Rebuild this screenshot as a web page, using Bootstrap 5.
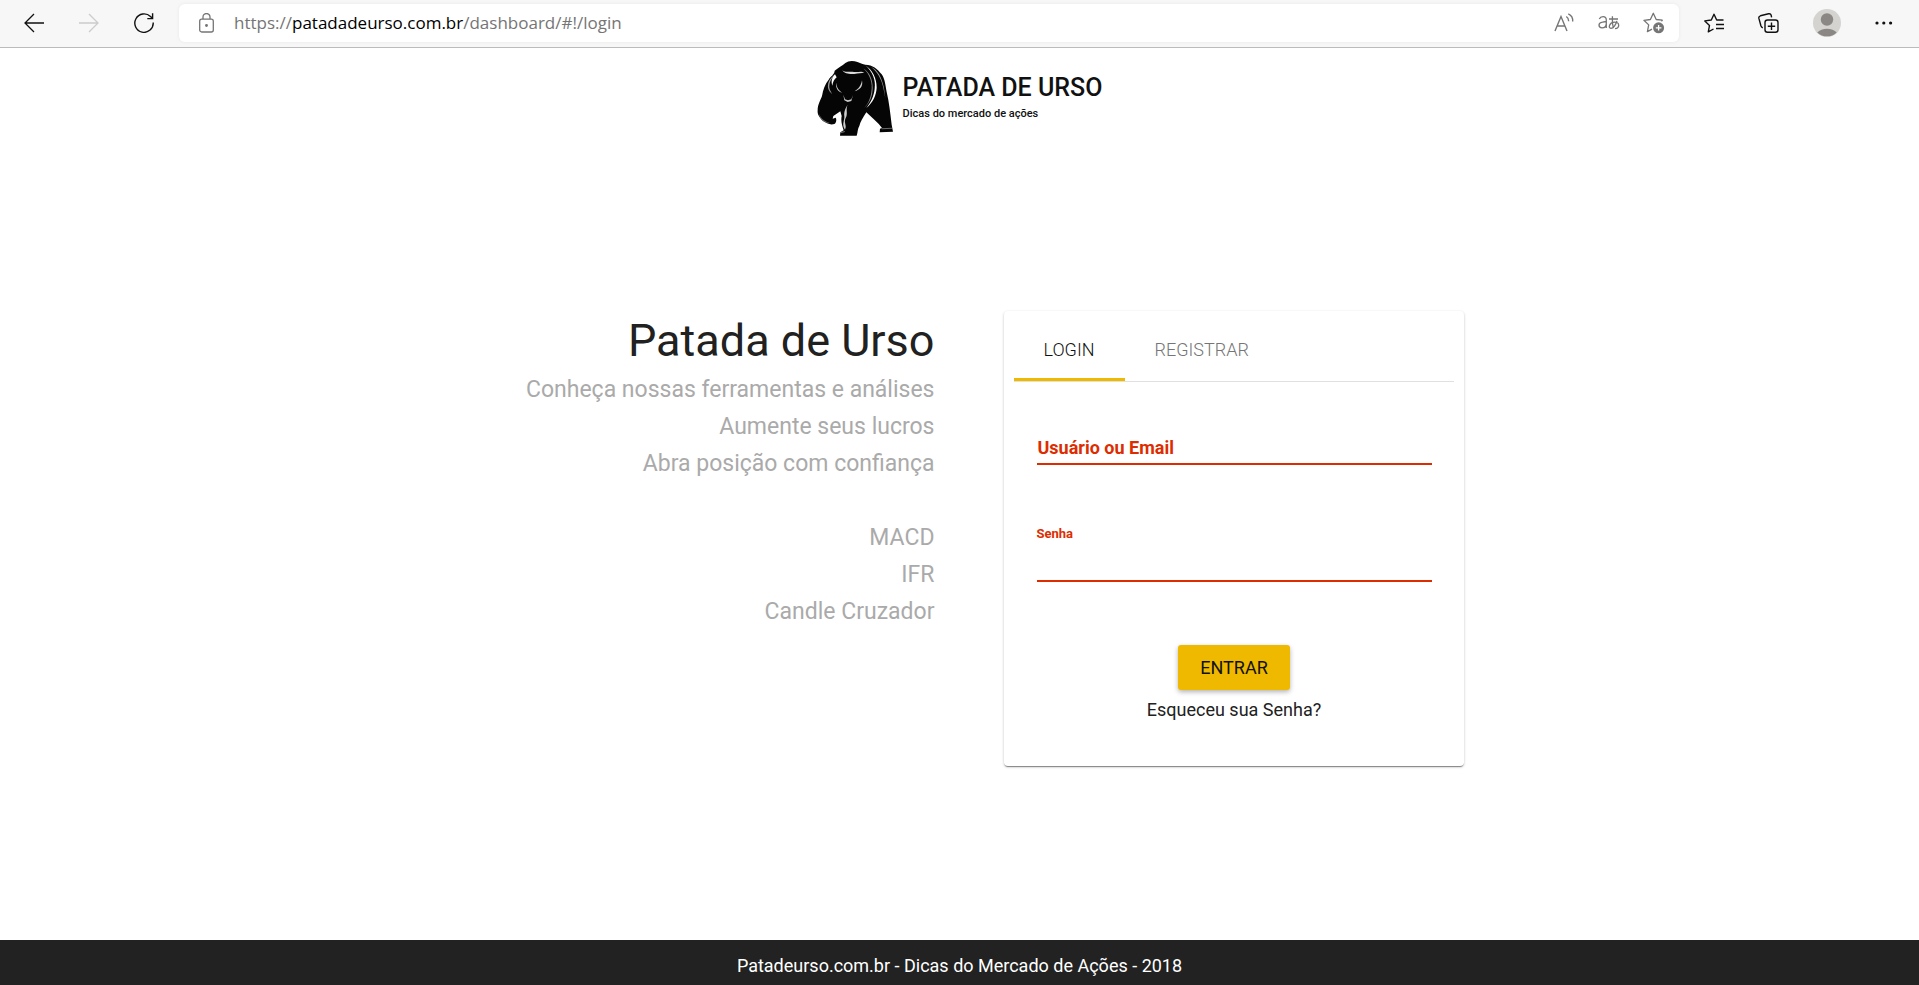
<!DOCTYPE html>
<html lang="pt-BR">
<head>
<meta charset="utf-8">
<meta name="viewport" content="width=device-width, initial-scale=1">
<title>Patada de Urso</title>
<link href="https://cdn.jsdelivr.net/npm/bootstrap@5.3.0/dist/css/bootstrap.min.css" rel="stylesheet">
<style>
  body { font-family: Roboto, sans-serif; color: #212121; background: #fff; }
  svg { display: block; }

  /* browser toolbar */
  .toolbar { background: #f7f7f7; border-bottom: 1px solid #bbb; height: 48px; padding: 4px 26px 5px 24px; }
  .tool { border: 0; background: none; padding: 0; color: #111; }
  .tool:disabled { color: #ccc; }
  .nav-tools { gap: 35px; margin-right: 25px; }
  .address { background: #fff; border-radius: 6px; height: 38px; padding: 0 14px 0 20px; box-shadow: 0 0 4px rgba(0,0,0,.06); }
  .address .tool { color: #757575; }
  .url { font-family: "Open Sans", "Noto Sans", sans-serif; font-size: 17px; line-height: 24px; color: #757575; margin-left: 20px; }
  .url b { font-weight: 400; color: #000; }
  .page-tools { gap: 23px; }
  .main-tools { gap: 34px; margin-left: 25px; }

  /* site */
  .brand { padding-top: 13px; gap: 10px; }
  .brand-name { font-size: 25px; line-height: 30px; color: #111; font-weight: 500; }
  .brand-sub { font-size: 11px; line-height: 22px; color: #111; font-weight: 500; }
  .login-area { max-width: 1008px; }
  .pitch { padding-right: 25px; }
  .pitch h1 { font-size: 45px; line-height: 60px; font-weight: 400; margin: 0; }
  .pitch p { font-size: 23px; line-height: 37px; color: #aaa; margin: 0; }
  .form-side { padding-left: 44px; }
  .panel { border: 0; border-radius: 4px; padding: 10px; box-shadow: 0 1px 3px rgba(0,0,0,.2), 0 1px 1px rgba(0,0,0,.14), 0 2px 1px -1px rgba(0,0,0,.3); }
  .tabs { border-bottom: 1px solid #e0e0e0; }
  .tabs .nav-link { border: 0; border-bottom: 3px solid transparent; border-radius: 0; background: none; font-size: 18px; line-height: 24px; font-weight: 300; padding: 17px 30px 16px; color: #757575; }
  .tabs .nav-link.active { color: #111; border-color: #efb900; }
  .fields { padding: 49px 22px 34px 23px; }
  .field label { color: #dd2c00; font-weight: 700; }
  .field input { border: 0; border-bottom: 2px solid #dd2c00; border-radius: 0; padding: 0; outline: 0; }
  .field-user { display: grid; margin-bottom: 61px; }
  .field-user > * { grid-area: 1 / 1; }
  .field-user label { font-size: 18px; line-height: 26px; padding: 4px 0 0 1px; pointer-events: none; z-index: 1; }
  .field-user input { height: 34px; }
  .field-pass label { font-size: 13px; line-height: 16px; display: block; margin-bottom: 8px; }
  .field-pass input { height: 32px; }
  .btn-enter { background: #efb900; color: #111; border: 0; border-radius: 3px; font-size: 18px; line-height: 27px; padding: 9px 22px; box-shadow: 0 2px 5px rgba(0,0,0,.3); margin-top: 63px; }
  .forgot { font-size: 18px; line-height: 24px; color: #212121; margin-top: 8px; }
  .site-footer { background: #222; color: #fff; font-size: 18px; line-height: 27px; padding: 12px 0 6px; }
</style>
</head>
<body class="d-flex flex-column min-vh-100">

<nav class="toolbar d-flex align-items-center" aria-label="Navegador">
  <div class="nav-tools d-flex align-items-center">
    <button class="tool" aria-label="Voltar"><svg width="20" height="20" viewBox="0 0 20 20" fill="none" stroke="currentColor" stroke-width="1.3"><path d="M20 10H1M10 1 1 10l9 9"/></svg></button>
    <button class="tool" aria-label="Avançar" disabled><svg width="20" height="20" viewBox="0 0 20 20" fill="none" stroke="currentColor" stroke-width="1.3"><path d="M0 10h19M10 1l9 9-9 9"/></svg></button>
    <button class="tool" aria-label="Atualizar"><svg width="20" height="20" viewBox="0 0 20 20" fill="none" stroke="currentColor" stroke-width="1.4"><path d="M19.2 9.5A9.2 9.2 0 1 1 16.5 3.6L18.6 5.6M18.6.3v5.3h-5.3"/></svg></button>
  </div>
  <div class="address d-flex align-items-center flex-grow-1">
    <button class="tool" aria-label="Informações do site"><svg width="15" height="20" viewBox="0 0 15 20" fill="none" stroke="currentColor" stroke-width="1.3"><rect x=".7" y="6.2" width="13.6" height="12.8" rx="2"/><path d="M4 6V4a3.5 3.5 0 0 1 7 0v2"/><circle cx="7.5" cy="12.5" r=".8" fill="currentColor"/></svg></button>
    <div class="url">https://<b>patadadeurso.com.br</b>/dashboard/#!/login</div>
    <div class="page-tools d-flex align-items-center ms-auto">
      <button class="tool" aria-label="Ler em voz alta"><svg width="21" height="20" viewBox="0 0 21 20" fill="none" stroke="currentColor" stroke-width="1.4"><path d="M1 18 7 3.5 13 18M3.2 13h7.6M12.3 3.5c1.6 1 2.4 2.8 2.4 4.8M14.3.8C17.600 2.300 19 5.300 18.700 8.500"/></svg></button>
      <button class="tool" aria-label="Traduzir"><svg width="22" height="20" viewBox="0 0 22 20" fill="none" stroke="currentColor" stroke-width="1.3"><path d="M1.300 6C2 4.400 3.300 3.700 5 3.700c2.300 0 3.300 1.200 3.300 3.200v8M8.300 8.500 4.500 9.200C2.200 9.500 1 10.400 1 12.100c0 1.600 1.200 2.700 3 2.700 2.400 0 4.300-1.700 4.300-4.300"/><path d="M11 6h9M14.400 3.200c-.3 5 0 8.500 1 12M18.900 7.800c-1 4-3.600 7.500-5.900 7.500-3.400 0-1.500-6.100 3.500-6.100 5.500 0 5.500 5.900.5 6.500"/></svg></button>
      <button class="tool" aria-label="Adicionar aos favoritos"><svg width="22" height="22" viewBox="0 0 22 22" fill="none" stroke="currentColor" stroke-width="1.3"><path d="M19.600 8.100 13.200 7.500 10.300 1.300 7.400 7.500.9 8.300l4.800 4.600-1.300 6.700 4.600-2.500M19.600 8.100l-1.200 1.100" stroke-linejoin="round"/><circle cx="15.600" cy="15.800" r="5.500" fill="currentColor" stroke="none"/><path d="M15.600 13v5.600M12.800 15.800h5.600" stroke="#fff"/></svg></button>
    </div>
  </div>
  <div class="main-tools d-flex align-items-center">
    <button class="tool" aria-label="Favoritos"><svg width="20" height="20" viewBox="0 0 20 20" fill="none" stroke="currentColor" stroke-width="1.4" stroke-linejoin="round"><path d="M19.500 7H12.700L10 1.200 7.300 7 .8 7.900l4.700 4.500-1.200 6.500L9.500 16M12 11.500h8M12 15.500h8"/></svg></button>
    <button class="tool" aria-label="Coleções"><svg width="21" height="20" viewBox="0 0 21 20" fill="none" stroke="currentColor" stroke-width="1.400"><rect x="7" y="7" width="13" height="12.200" rx="2.500"/><path d="M13.500 9.500v7.400M9.800 13.200h7.400M4.800 14.800C3.700 14.400 3.200 13.800 2.900 12.800L.9 5.400c-.3-1.300.2-2.200 1.500-2.600L10.600.8c1.300-.3 2.200.2 2.600 1.500l.4 2"/></svg></button>
    <button class="tool" aria-label="Perfil"><svg width="28" height="28" viewBox="0 0 28 28"><circle cx="14" cy="14" r="14" fill="#d5d3d0"/><circle cx="14" cy="10.500" r="6.200" fill="#8a8784"/><path d="M4.300 23.400a11.500 8 0 0 1 19.400 0A14 14 0 0 1 4.300 23.400Z" fill="#8a8784"/></svg></button>
    <button class="tool" aria-label="Mais opções"><svg width="18" height="20" viewBox="0 0 18 20" fill="currentColor"><circle cx="2" cy="10" r="1.600"/><circle cx="8.800" cy="10" r="1.600"/><circle cx="15.600" cy="10" r="1.600"/></svg></button>
  </div>
</nav>

<header class="brand d-flex justify-content-center">
  <svg width="76" height="75" viewBox="45 33 228 225" role="img" aria-label="Urso">
    <path fill="#050505" d="M98 62C108 54 121 47 130 39Q141 31 158 34C170 36 178 42 190 44C212 45 226 56 239 73C249 87 250 105 254 126C261 155 265 190 269 224L273 245L233 247L234 236L240 234C229 218 210 204 193 187C183 203 175 215 172 228C167 235 168 244 164 257L114 257L115 247L125 241C120 226 116 214 119 198L115 184L94 198L92 206L101 203C105 209 102 219 97 222C84 226 72 219 64 214C56 206 45 195 47 181C47 164 55 151 60 138C63 118 69 103 80 89C85 79 97 75 98 62Z"/>
    <g fill="#fff">
      <path d="M99 73C90 85 84 91 82 107C81 119 88 124 90 132C84 126 76 118 78 105C80 89 91 80 99 73Z" opacity=".6"/>
      <path d="M121 61C130 69 143 63 156 66C168 67 178 63 187 67C179 72 169 69 157 72C144 73 127 72 121 61Z" opacity=".85"/>
      <path d="M99 73L104 82C96 88 93 96 91 107C87 95 89 83 99 73Z"/>
      <path d="M103 98C104 114 111 122 121 128C107 125 100 113 103 98Z" opacity=".8"/>
      <path d="M180 91C177 108 169 117 158 124C173 120 184 110 180 91Z" opacity=".8"/>
      <path d="M124 134L127 151L137 156L148 153L153 135L148 148L138 151L129 148Z" opacity=".8"/>
      <path d="M190 46C212 66 222 90 218 116C216 138 206 158 193 174C213 157 223 136 224 113C224 84 211 60 190 46Z"/>
      <path d="M184 55C204 74 213 99 208 126C206 145 197 163 187 173C204 157 212 138 212 113C212 88 203 68 184 55Z" opacity=".55"/>
      <path d="M207 51C226 65 238 86 244 113L250 145L246 114C239 82 228 60 207 51Z" opacity=".6"/>
      <path d="M137 164C130 179 139 190 131 204C124 219 136 226 129 239C118 224 128 212 127 199C125 184 131 174 137 164Z" opacity=".8"/>
      <path d="M50 190C57 207 68 215 86 220C68 220 54 209 50 190Z" opacity=".4"/>
      <path d="M239 235L270 233L270 236L239 238Z" opacity=".4"/>
      <path d="M116 246L130 242L127 247L116 250Z" opacity=".4"/>
    </g>
  </svg>
  <div class="pt-2">
    <div class="brand-name mt-1">PATADA DE URSO</div>
    <div class="brand-sub">Dicas do mercado de ações</div>
  </div>
</header>

<main class="flex-grow-1 d-flex align-items-center">
  <div class="login-area container-fluid px-0">
    <div class="row g-0">
      <section class="pitch col-6 text-end">
        <h1>Patada de Urso</h1>
        <p>Conheça nossas ferramentas e análises<br>Aumente seus lucros<br>Abra posição com confiança</p>
        <p><br>MACD<br>IFR<br>Candle Cruzador</p>
      </section>
      <section class="form-side col-6">
        <div class="panel card">
          <div class="tabs nav" role="tablist">
            <button class="nav-link active" role="tab" aria-selected="true">LOGIN</button>
            <button class="nav-link" role="tab" aria-selected="false">REGISTRAR</button>
          </div>
          <form class="fields">
            <div class="field field-user">
              <label for="user">Usuário ou Email</label>
              <input class="w-100" id="user" type="text">
            </div>
            <div class="field field-pass">
              <label for="pass">Senha</label>
              <input class="w-100" id="pass" type="password">
            </div>
            <div class="d-flex flex-column align-items-center">
              <button class="btn-enter btn" type="button">ENTRAR</button>
              <a class="forgot text-decoration-none" href="#">Esqueceu sua Senha?</a>
            </div>
          </form>
        </div>
      </section>
    </div>
  </div>
</main>

<footer class="site-footer text-center">Patadeurso.com.br - Dicas do Mercado de Ações - 2018</footer>

<script src="https://cdn.jsdelivr.net/npm/bootstrap@5.3.0/dist/js/bootstrap.bundle.min.js"></script>
</body>
</html>
